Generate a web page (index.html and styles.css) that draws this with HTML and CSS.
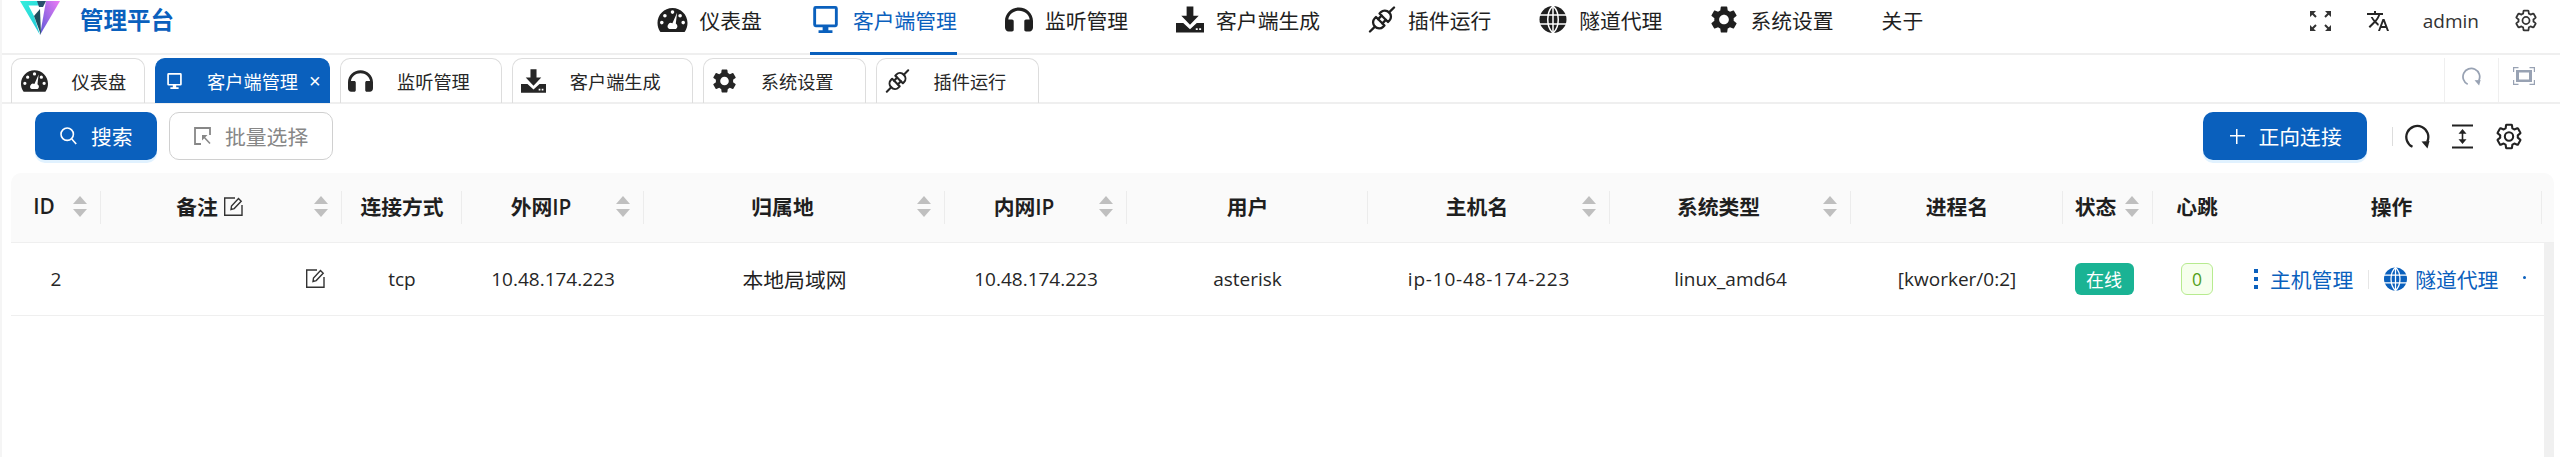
FILE: index.html
```html
<!DOCTYPE html>
<html lang="zh-CN">
<head>
<meta charset="utf-8">
<title>管理平台</title>
<link rel="stylesheet" href="styles.css">
</head>
<body>
<svg class="defs" width="0" height="0" aria-hidden="true">
  <defs>
    <linearGradient id="logoCyan" x1="0" y1="0" x2="1" y2="1"><stop offset="0" stop-color="#35f0dc"/><stop offset="1" stop-color="#1fc4d8"/></linearGradient>
    <linearGradient id="logoPink" x1="0" y1="1" x2="1" y2="0"><stop offset="0" stop-color="#5a58d8"/><stop offset="1" stop-color="#ef7cf5"/></linearGradient>
    <symbol id="i-gauge" viewBox="0 0 30 24"><path fill-rule="evenodd" d="M15 0C6.700 0 0 6.700 0 15c0 3.200.9 6 2.500 8.400.3.400.7.600 1.200.600h22.600c.5 0 .9-.2 1.200-.6C29.100 21 30 18.200 30 15 30 6.700 23.300 0 15 0zM15 2.300a1.800 1.800 0 1 1 0 3.600 1.800 1.800 0 0 1 0-3.600zM7.400 6a1.800 1.800 0 1 1 0 3.600 1.800 1.800 0 0 1 0-3.600zM4.300 12.800a1.800 1.800 0 1 1 0 3.600 1.800 1.800 0 0 1 0-3.600zM25.700 12.800a1.800 1.800 0 1 1 0 3.600 1.800 1.800 0 0 1 0-3.600zM22.600 6a1.800 1.800 0 1 1 0 3.600 1.800 1.800 0 0 1 0-3.600zM19.600 4.800l-1.300 10.700a3.200 3.200 0 0 1 .1 5.500h-6.500a3.200 3.200 0 0 1 3-5.700z"/></symbol>
    <symbol id="i-monitor" viewBox="0 0 30 33"><path fill-rule="evenodd" d="M3 0h24a3 3 0 0 1 3 3v20a3 3 0 0 1-3 3H3a3 3 0 0 1-3-3V3a3 3 0 0 1 3-3zM3.500 3.500v19h23v-19zM11.500 26h7v3.500h5V33H6.500v-3.500h5z"/></symbol>
    <symbol id="i-headset" viewBox="0 0 28 24"><path d="M14 0C6.300 0 0 6 0 13.500V20c0 2.200 1.500 4 3.500 4H7c1 0 1.700-.8 1.700-1.700v-8.600C8.700 12.800 8 12 7 12H3.300C3.900 7 8.500 3.200 14 3.200S24.100 7 24.700 12H21c-1 0-1.700.8-1.700 1.700v8.600c0 .9.700 1.700 1.700 1.700h3.500c2 0 3.500-1.800 3.500-4v-6.500C28 6 21.700 0 14 0z"/></symbol>
    <symbol id="i-download" viewBox="0 0 29 27"><path fill-rule="evenodd" d="M11 0h7v9.500h5.500L14.500 19 5.500 9.500H11zM0 17h7.500l7 6.500 7-6.500H29v10H0zM20.500 22.500v2h2v-2zM24 22.500v2h2v-2z"/></symbol>
    <symbol id="i-plug" viewBox="0 0 27 27"><g transform="rotate(-45 13.500 13.500)" fill="none" stroke="currentColor" stroke-width="2.300" stroke-linecap="round" stroke-linejoin="round"><path d="M-3.500 13.500H3.500M23.500 13.500h7"/><path d="M11 7.500H9a5.500 6 0 0 0 0 12h2z"/><path d="M16 7.500h2a5.500 6 0 0 1 0 12h-2z"/><path d="M11 10.500h5M11 16.500h5"/></g></symbol>
    <symbol id="i-globe" viewBox="0 0 27 27"><circle cx="13.500" cy="13.500" r="13.500"/><g fill="none" stroke="#fff" stroke-width="1.500"><path d="M0 9h27M0 18h27"/><path d="M13.500 0v27"/><path d="M13.500 0C6.500 6 6.500 21 13.500 27M13.500 0c7 6 7 21 0 27"/></g></symbol>
    <symbol id="i-gear" viewBox="2.400 2 19.200 20"><path d="M19.140 12.940c.04-.3.06-.61.06-.94 0-.32-.02-.64-.07-.94l2.030-1.580a.49.49 0 0 0 .12-.61l-1.920-3.320a.488.488 0 0 0-.59-.22l-2.390.96c-.5-.38-1.030-.7-1.620-.94l-.36-2.540a.484.484 0 0 0-.48-.41h-3.840c-.24 0-.43.17-.47.41l-.36 2.540c-.59.24-1.130.57-1.620.94l-2.390-.96c-.22-.08-.47 0-.59.22L2.740 8.870c-.12.21-.08.47.12.61l2.030 1.580c-.05.3-.09.63-.09.94s.02.64.07.94l-2.030 1.580a.49.49 0 0 0-.12.61l1.920 3.320c.12.22.37.29.59.22l2.390-.96c.5.38 1.030.7 1.620.94l.36 2.540c.05.24.24.41.48.41h3.840c.24 0 .44-.17.47-.41l.36-2.540c.59-.24 1.130-.56 1.620-.94l2.390.96c.22.08.47 0 .59-.22l1.920-3.320c.12-.22.07-.47-.12-.61l-2.010-1.580zM12 15.600c-1.980 0-3.600-1.620-3.600-3.600s1.620-3.600 3.600-3.600 3.600 1.620 3.600 3.600-1.620 3.600-3.600 3.600z"/></symbol>
    <symbol id="i-gear-line" viewBox="1.400 1 21.200 22"><path fill="none" stroke="currentColor" stroke-width="1.700" stroke-linejoin="round" d="M19.140 12.940c.04-.3.06-.61.06-.94 0-.32-.02-.64-.07-.94l2.030-1.580a.49.49 0 0 0 .12-.61l-1.920-3.320a.488.488 0 0 0-.59-.22l-2.390.96c-.5-.38-1.030-.7-1.620-.94l-.36-2.540a.484.484 0 0 0-.48-.41h-3.840c-.24 0-.43.17-.47.41l-.36 2.540c-.59.24-1.130.57-1.620.94l-2.390-.96c-.22-.08-.47 0-.59.22L2.740 8.870c-.12.21-.08.47.12.61l2.030 1.580c-.05.3-.09.63-.09.94s.02.64.07.94l-2.030 1.580a.49.49 0 0 0-.12.61l1.920 3.320c.12.22.37.29.59.22l2.390-.96c.5.38 1.030.7 1.620.94l.36 2.540c.05.24.24.41.48.41h3.840c.24 0 .44-.17.47-.41l.36-2.540c.59-.24 1.130-.56 1.620-.94l2.390.96c.22.08.47 0 .59-.22l1.920-3.320c.12-.22.07-.47-.12-.61l-2.010-1.580z"/><circle cx="12" cy="12" r="3.400" fill="none" stroke="currentColor" stroke-width="1.700"/></symbol>
    <symbol id="i-refresh" viewBox="0 0 25 25"><path fill="none" stroke="currentColor" stroke-width="2.300" d="M7.500 22.800A11 11 0 1 1 22.300 17.500"/><path fill="currentColor" d="M16.500 17.500l8-.5-2 7.500z"/></symbol>
    <symbol id="i-edit" viewBox="0 0 19 19"><g fill="none" stroke="currentColor" stroke-width="1.400"><path d="M11 1H.7v17.300H18V8"/><path d="M7 12.500 7.500 9 14.500 1.500l2.700 2.700-7 7.400z"/></g></symbol>
  </defs>
</svg>
<div class="app">
  <header class="topbar">
    <div class="brand">
      <svg class="logo" viewBox="0 0 40 34" aria-hidden="true">
        <path fill="url(#logoCyan)" d="M0 0h24l-3 4.500H8.500L14 15l6 19z"/>
        <path fill="url(#logoPink)" d="M40 0H26l-6 34z"/>
        <path fill="#1f4d5c" d="M14 15l6-7 1 26z"/>
        <path fill="#27506b" d="M17 0h9l-3 6h-4z"/>
      </svg>
      <span class="brand-name">管理平台</span>
    </div>
    <nav class="nav">
      <a class="nav-item nav-wide"><svg class="nav-ico gauge"><use href="#i-gauge"/></svg>仪表盘</a>
      <a class="nav-item nav-wide active"><svg class="nav-ico monitor"><use href="#i-monitor"/></svg>客户端管理</a>
      <a class="nav-item"><svg class="nav-ico"><use href="#i-headset"/></svg>监听管理</a>
      <a class="nav-item"><svg class="nav-ico"><use href="#i-download"/></svg>客户端生成</a>
      <a class="nav-item"><svg class="nav-ico"><use href="#i-plug"/></svg>插件运行</a>
      <a class="nav-item"><svg class="nav-ico"><use href="#i-globe"/></svg>隧道代理</a>
      <a class="nav-item"><svg class="nav-ico"><use href="#i-gear"/></svg>系统设置</a>
      <a class="nav-item">关于</a>
    </nav>
    <div class="top-tools">
      <svg class="tool-full" viewBox="0 0 21 20" aria-hidden="true"><g fill="none" stroke="currentColor" stroke-width="2"><path d="M1 1l5 5M20 1l-5 5M1 19l5-5M20 19l-5-5"/></g><path d="M0 0h6L0 6zM21 0h-6l6 6zM0 20h6l-6-6zM21 20h-6l6-6z"/></svg>
      <svg class="tool-lang" viewBox="1 2 22 20" aria-hidden="true"><path d="M12.870 15.070l-2.540-2.510.03-.03c1.740-1.940 2.980-4.170 3.710-6.530H17V4h-7V2H8v2H1v1.990h11.170C11.500 7.920 10.440 9.750 9 11.350 8.070 10.320 7.300 9.190 6.690 8h-2c.73 1.630 1.730 3.170 2.980 4.560l-5.090 5.020L4 19l5-5 3.110 3.110.76-2.040zM18.500 10h-2L12 22h2l1.120-3h4.750L21 22h2l-4.500-12zm-2.620 7l1.620-4.330L19.120 17h-3.240z"/></svg>
      <span class="user">admin</span>
      <svg class="tool-gear"><use href="#i-gear-line"/></svg>
    </div>
  </header>

  <div class="tabbar">
    <div class="tabs">
      <a class="tab tab-first"><svg class="tab-ico gauge"><use href="#i-gauge"/></svg>仪表盘</a>
      <a class="tab tab-active"><svg class="tab-ico monitor"><use href="#i-monitor"/></svg>客户端管理<span class="tab-close">×</span></a>
      <a class="tab"><svg class="tab-ico"><use href="#i-headset"/></svg>监听管理</a>
      <a class="tab"><svg class="tab-ico"><use href="#i-download"/></svg>客户端生成</a>
      <a class="tab"><svg class="tab-ico"><use href="#i-gear"/></svg>系统设置</a>
      <a class="tab"><svg class="tab-ico"><use href="#i-plug"/></svg>插件运行</a>
    </div>
    <div class="tab-tools">
      <div class="tab-tool"><svg class="tab-refresh"><use href="#i-refresh"/></svg></div>
      <div class="tab-tool tab-tool-last">
        <svg class="tab-focus" viewBox="0 0 22 18" aria-hidden="true"><path fill="none" stroke="currentColor" stroke-width="1.200" d="M.6 5V.6h4.900M16.500.6h4.900V5M.6 13v4.400h4.900M16.500 17.400h4.900V13"/><path fill="currentColor" fill-rule="evenodd" d="M3 3h16v12H3zM6 5.500v7h10v-7z"/></svg>
      </div>
    </div>
  </div>

  <div class="toolbar">
    <div class="tool-group">
      <button class="btn btn-primary btn-search"><svg class="btn-ico" viewBox="0 0 17 18" aria-hidden="true"><circle cx="7.200" cy="7.200" r="6.200" fill="none" stroke="currentColor" stroke-width="1.600"/><path d="M11.800 12l4.400 5" stroke="currentColor" stroke-width="1.600"/></svg>搜索</button>
      <button class="btn btn-disabled"><svg class="btn-ico" viewBox="0 0 17 18" aria-hidden="true"><path fill="none" stroke="currentColor" stroke-width="1.800" d="M7 17H1V1h15v7"/><path fill="none" stroke="currentColor" stroke-width="1.500" d="M9 9l7 7.500"/><path fill="currentColor" d="M8 8h5.500L8 13.500z"/></svg>批量选择</button>
    </div>
    <div class="tool-group tool-right">
      <button class="btn btn-primary btn-add"><span class="plus"></span>正向连接</button>
      <span class="tool-divider"></span>
      <svg class="act-refresh"><use href="#i-refresh"/></svg>
      <svg class="act-height" viewBox="0 0 21 25" aria-hidden="true"><path d="M0 .5h21v2H0zM0 22.500h21v2H0z"/><path d="M10.500 5l4 4.800h-3.200v5.400h3.200l-4 4.800-4-4.800h3.200V9.800H6.500z"/></svg>
      <svg class="act-gear"><use href="#i-gear-line"/></svg>
    </div>
  </div>

  <section class="grid-table">
    <div class="thead">
      <div class="th sort th-id"><span class="th-label">ID</span><span class="sorter"></span></div>
      <div class="th sort"><span class="th-label">备注 <svg class="edit"><use href="#i-edit"/></svg></span><span class="sorter"></span></div>
      <div class="th">连接方式</div>
      <div class="th sort"><span class="th-label">外网IP</span><span class="sorter"></span></div>
      <div class="th sort"><span class="th-label">归属地</span><span class="sorter"></span></div>
      <div class="th sort"><span class="th-label">内网IP</span><span class="sorter"></span></div>
      <div class="th">用户</div>
      <div class="th sort"><span class="th-label">主机名</span><span class="sorter"></span></div>
      <div class="th sort"><span class="th-label">系统类型</span><span class="sorter"></span></div>
      <div class="th">进程名</div>
      <div class="th sort th-status"><span class="th-label">状态</span><span class="sorter"></span></div>
      <div class="th th-plain">心跳</div>
      <div class="th">操作</div>
      <div class="th-gutter"></div>
    </div>
    <div class="tbody">
      <div class="rows">
        <div class="tr">
          <div class="td latin">2</div>
          <div class="td td-remark"><svg class="edit"><use href="#i-edit"/></svg></div>
          <div class="td latin">tcp</div>
          <div class="td latin">10.48.174.223</div>
          <div class="td">本地局域网</div>
          <div class="td latin">10.48.174.223</div>
          <div class="td latin">asterisk</div>
          <div class="td latin td-host">ip-10-48-174-223</div>
          <div class="td latin">linux_amd64</div>
          <div class="td latin">[kworker/0:2]</div>
          <div class="td td-status"><span class="tag-online">在线</span></div>
          <div class="td"><span class="tag-beat">0</span></div>
          <div class="td td-actions">
            <a class="action action-host"><span class="dots"><i></i><i></i><i></i></span>主机管理</a>
            <span class="action-divider"></span>
            <a class="action action-tunnel"><svg class="action-globe"><use href="#i-globe"/></svg>隧道代理</a>
            <span class="action-more"></span>
          </div>
        </div>
      </div>
      <div class="scrollbar"></div>
    </div>
  </section>
</div>
</body>
</html>
```
FILE: styles.css
```css
* { box-sizing: border-box; }
html, body { margin: 0; height: 100%; overflow: hidden; background: #fff; }
body {
  font-family: "Open Sans", "Noto Sans CJK SC", sans-serif;
  font-size: 20.800px;
  color: #1f1f1f;
}
.defs { position: absolute; }
svg { fill: currentColor; display: block; flex: none; }
a { color: inherit; text-decoration: none; }

.app {
  height: 457px;
  display: flex;
  flex-direction: column;
  border-left: 2px solid #f5f5f5;
}

/* top bar */
.topbar {
  height: 55px;
  flex: none;
  display: flex;
  border-bottom: 2px solid #efefef;
}
.brand {
  width: 654.500px;
  flex: none;
  display: flex;
  padding: 1px 0 0 18px;
  align-items: flex-start;
}
.logo { width: 40px; height: 34px; }
.brand-name {
  margin: 2px 0 0 20px;
  font-size: 23.500px;
  line-height: 34px;
  font-weight: 700;
  color: #0a60bd;
}
.nav { display: flex; gap: 48px; flex: 1; }
.nav-item {
  height: 55px;
  margin-bottom: -2px;
  padding-bottom: 13px;
  display: flex;
  align-items: center;
  gap: 12px;
  white-space: nowrap;
  border-bottom: 3px solid transparent;
}
.nav-item.active { color: #0a60bd; border-bottom-color: #0a60bd; }
.nav-ico { width: 28px; height: 27px; }
.nav-ico.gauge { width: 31px; height: 24px; }
.nav-ico.monitor { width: 31px; height: 27px; }
.top-tools { display: flex; align-items: center; padding: 0 23px 12px 0; }
.tool-full { width: 21px; height: 20px; color: #333; }
.tool-lang { width: 22px; height: 20px; margin-left: 36px; color: #262626; }
.user { font-size: 19px; margin-left: 34px; color: #333; }
.tool-gear { width: 22px; height: 23px; margin-left: 36px; color: #333; }

/* tabs */
.tabbar {
  height: 49px;
  flex: none;
  display: flex;
  justify-content: space-between;
  border-bottom: 2px solid #efefef;
}
.tabs { display: flex; gap: 10px; padding: 3px 0 0 9px; }
.tab {
  display: flex;
  align-items: center;
  height: 45px;
  padding: 0 31.500px 0 7.500px;
  gap: 24px;
  font-size: 18.200px;
  border: 1.500px solid #ddd;
  border-bottom: 0;
  border-radius: 10px 10px 0 0;
  white-space: nowrap;
  color: #262626;
}
.tab-ico { width: 25px; height: 24px; }
.tab-ico.gauge { width: 27px; height: 22px; }
.tab-ico.monitor { width: 17px; height: 16px; }
.tab-first { padding: 0 17.500px 0 8.500px; }
.tab-active {
  padding: 0 7.500px 0 10.500px;
  color: #fff;
  background: #0a60bd;
  border-color: #0a60bd;
}
.tab-close {
  width: 12px;
  margin-left: -13px;
  font-size: 20px;
  line-height: 1;
  font-weight: 300;
  font-family: "Liberation Sans", sans-serif;
}
.tab-tools { display: flex; padding-top: 3px; margin-right: 11px; }
.tab-tool {
  width: 54px;
  border-left: 1.500px solid #efefef;
  display: flex;
  align-items: center;
  justify-content: center;
  color: #98a2b3;
  padding-bottom: 8px;
}
.tab-tool-last { width: 51px; }
.tab-refresh { width: 19px; height: 19px; }
.tab-focus { width: 22px; height: 18px; }

/* toolbar */
.toolbar {
  height: 69px;
  flex: none;
  padding: 8px 38px 0 33px;
  display: flex;
  justify-content: space-between;
  align-items: flex-start;
}
.tool-group { display: flex; gap: 12px; }
.tool-right { align-items: center; gap: 0; }
.btn {
  height: 48px;
  display: flex;
  align-items: center;
  font: inherit;
  border-radius: 10px;
  padding: 0 24px;
  gap: 14px;
  border: 1.500px solid transparent;
  white-space: nowrap;
}
.btn-primary {
  color: #fff;
  background: #0a60bd;
  box-shadow: 0 3px 0 rgba(5, 145, 255, .12);
}
.btn-search { width: 122px; }
.btn-disabled {
  width: 164px;
  color: #878787;
  background: #fff;
  border-color: #d0d0d0;
}
.btn-ico { width: 17px; height: 18px; }
.btn-add { width: 164px; padding: 0 20px 0 25.500px; }
.plus {
  width: 15px;
  height: 15px;
  flex: none;
  background:
    linear-gradient(#fff, #fff) center / 100% 1.500px no-repeat,
    linear-gradient(#fff, #fff) center / 1.500px 100% no-repeat;
}
.tool-divider { width: 1px; height: 19px; margin: 0 12px 0 25px; background: #ddd; }
.act-refresh { width: 25px; height: 25px; color: #222; }
.act-height { width: 21px; height: 25px; margin-left: 22px; color: #222; }
.act-gear { width: 26px; height: 27px; margin-left: 23px; color: #222; }

/* table */
.grid-table {
  flex: 1;
  min-height: 0;
  margin: 0 6px 0 9px;
  display: flex;
  flex-direction: column;
}
.thead, .tr {
  display: grid;
  grid-template-columns: 90px 241px 120px 182px 301px 182px 241px 242px 241px 212px 90px 88px 301px;
}
.thead {
  grid-template-columns: 90px 241px 120px 182px 301px 182px 241px 242px 241px 212px 90px 88px 301px 10px;
  height: 70px;
  flex: none;
  background: #fafafa;
  border-radius: 10px 10px 0 0;
  border-bottom: 1.500px solid #efefef;
}
.th {
  position: relative;
  display: flex;
  align-items: center;
  justify-content: center;
  font-weight: 600;
  color: #1f1f1f;
  white-space: nowrap;
  padding-bottom: 3px;
}
.th::after {
  content: "";
  position: absolute;
  right: 0;
  top: 18px;
  height: 33px;
  width: 1px;
  background: #ececec;
}
.th-plain::after { display: none; }
.th.sort { padding: 0 14px 3px; gap: 10px; }
.th-label { flex: 1; display: flex; align-items: center; justify-content: center; gap: 6px; }
.th-id { gap: 0; }
.th.th-status { padding-left: 12px; gap: 9px; }
.sorter {
  width: 14px;
  flex: none;
  display: flex;
  flex-direction: column;
  gap: 5px;
}
.sorter::before, .sorter::after {
  content: "";
  width: 0;
  height: 0;
  border-left: 7px solid transparent;
  border-right: 7px solid transparent;
}
.sorter::before { border-bottom: 8px solid #bfbfbf; }
.sorter::after { border-top: 8px solid #bfbfbf; }
.edit { width: 19px; height: 19px; color: #333; }
.tbody { flex: 1; min-height: 0; display: flex; }
.rows { flex: 1; }
.scrollbar { width: 10px; background: #f0f0f0; }
.tr { height: 73px; border-bottom: 1.500px solid #efefef; }
.td {
  display: flex;
  align-items: center;
  justify-content: center;
  white-space: nowrap;
  min-width: 0;
}
.latin { font-size: 19px; color: #262626; }
.td-host { letter-spacing: .8px; }
.td-remark { justify-content: flex-end; padding: 0 17px 2px 0; }
.td-status { padding-right: 8px; }
.tag-online {
  width: 59px;
  height: 32px;
  display: flex;
  align-items: center;
  justify-content: center;
  font-size: 18px;
  color: #fff;
  background: #1ab394;
  border-radius: 6px;
}
.tag-beat {
  width: 32px;
  height: 32px;
  display: flex;
  align-items: center;
  justify-content: center;
  font-size: 17.500px;
  color: #52a01a;
  background: #f6ffed;
  border: 1.500px solid #b7eb8f;
  border-radius: 6px;
}
.td-actions {
  justify-content: flex-start;
  overflow: hidden;
  padding: 0 0 0 13px;
  color: #0a60bd;
}
.action { display: flex; align-items: center; }
.dots { width: 16px; display: flex; flex-direction: column; gap: 4px; flex: none; }
.dots i { width: 4px; height: 4px; background: #0a60bd; display: block; }
.action-divider { width: 1px; height: 19px; margin: 0 15px; background: #e6e6e6; }
.action-globe { width: 23px; height: 24px; margin-right: 8px; }
.action-more { width: 3px; height: 3px; border-radius: 50%; background: #0a60bd; margin: -4px 0 0 25px; }
```
